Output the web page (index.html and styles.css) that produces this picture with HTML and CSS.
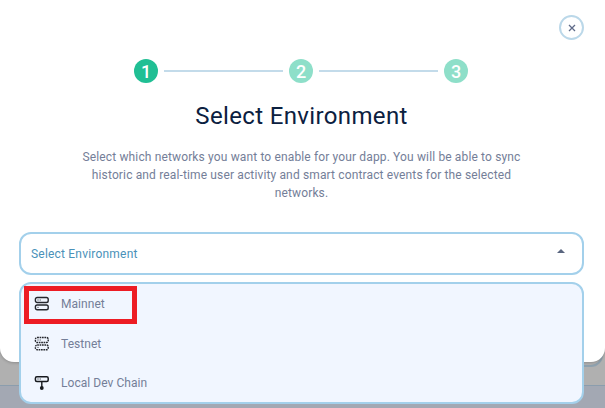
FILE: index.html
```
<!DOCTYPE html>
<html lang="en">
<head>
<meta charset="utf-8">
<title>Select Environment</title>
<link rel="stylesheet" href="styles.css">
</head>
<body>
<div class="footer-bar"></div>
<div class="field-behind"></div>
<main class="modal">
  <header class="modal-top">
    <button class="close" aria-label="Close"><svg width="8" height="8" viewBox="0 0 8 8"><path d="M1 1l6 6M7 1L1 7" stroke="#5f6b89" stroke-width="1.3" fill="none"/></svg></button>
  </header>
  <div class="steps">
    <span class="step active">1</span><span class="line"></span><span class="step">2</span><span class="line"></span><span class="step">3</span>
  </div>
  <h1>Select Environment</h1>
  <p class="intro">Select which networks you want to enable for your dapp. You will be able to sync<br>historic and real-time user activity and smart contract events for the selected<br>networks.</p>
  <div class="select">
    <div class="select-box"><span class="select-label">Select Environment</span><span class="caret"></span></div>
    <div class="menu">
      <div class="option">
        <svg class="icon" viewBox="0 0 16 16"><g fill="none" stroke="#25272d" stroke-width="1.4"><rect x="1.4" y="1.5" width="12.8" height="5" rx="1.8"/><rect x="1.4" y="9" width="12.8" height="4.8" rx="1.8"/></g><path d="M3.5 4h1M5.7 4h1M3.5 11.4h1" stroke="#25272d"/></svg>
        <span>Mainnet</span>
      </div>
      <div class="option">
        <svg class="icon" viewBox="0 0 16 16"><g fill="none" stroke="#25272d" stroke-width="1.4" stroke-dasharray="1.7 .7"><rect x="1.4" y="1.5" width="12.8" height="5" rx="1.8"/><rect x="1.4" y="9" width="12.8" height="4.8" rx="1.8"/></g><path d="M3.5 4h1M5.7 4h1M3.5 11.4h1" stroke="#25272d"/></svg>
        <span>Testnet</span>
      </div>
      <div class="option">
        <svg class="icon" viewBox="0 0 16 16"><rect x="1.4" y="1.7" width="12.8" height="4.8" rx="1.5" fill="none" stroke="#17191e" stroke-width="1.5"/><path d="M3.5 4h1M5.7 4h1" stroke="#17191e"/><path d="M7.8 6.5v6" stroke="#17191e" stroke-width="1.4"/><circle cx="7.8" cy="13" r="1.9" fill="#17191e"/></svg>
        <span>Local Dev Chain</span>
      </div>
      <div class="highlight"></div>
    </div>
  </div>
</main>
</body>
</html>
```
FILE: styles.css
```
* { box-sizing: border-box; }
body {
  margin: 0;
  height: 408px;
  overflow: hidden;
  position: relative;
  background: #b0b0b0;
  font-family: Roboto, "Liberation Sans", sans-serif;
}
.footer-bar {
  position: absolute;
  inset: 385px 0 0;
  background: #a3a8b3;
  border-top: 1px solid #8b9dad;
}
.field-behind {
  position: absolute;
  left: 300px;
  top: 330px;
  width: 303px;
  height: 37px;
  border: 2px solid #8fa1ae;
  border-radius: 12px;
}
.modal {
  position: relative;
  height: 362px;
  padding: 15px 21px 0 19px;
  background: #fff;
  border-radius: 0 0 14px 14px;
  box-shadow: 0 1px 3px #0003;
}
.modal-top { display: flex; justify-content: flex-end; height: 43px; }
.close {
  width: 25px;
  height: 25px;
  padding: 0;
  display: grid;
  place-items: center;
  background: #fff;
  border: 2px solid #bbd8e9;
  border-radius: 50%;
}
.steps { display: flex; align-items: center; gap: 6px; width: 334px; margin-left: 115px; height: 25px; }
.step {
  flex: none;
  width: 24px;
  height: 24px;
  border-radius: 50%;
  background: #8edfc9;
  color: #fff;
  font-size: 18px;
  font-weight: 500;
  line-height: 25px;
  text-align: center;
}
.active { background: #20bf94; }
.line { flex: 1; height: 2px; background: #c3dbea; }
h1 {
  margin: 18px 0 0;
  height: 30px;
  color: #0b2040;
  font-size: 24px;
  font-weight: 400;
  line-height: 30px;
  letter-spacing: .36px;
  text-align: center;
  white-space: nowrap;
}
.intro {
  margin: 17px 0 0;
  height: 84px;
  color: #747e98;
  font-size: 12px;
  line-height: 18.2px;
  letter-spacing: .14px;
  text-align: center;
  white-space: nowrap;
}
.select { position: relative; }
.select-box {
  display: flex;
  align-items: center;
  justify-content: space-between;
  height: 43px;
  padding: 0 17px 0 10px;
  border: 2px solid #a3d0eb;
  border-radius: 12px;
  color: #4a91b9;
  font-size: 12px;
  letter-spacing: .2px;
}
.caret {
  margin-bottom: 5px;
  border: 4px solid transparent;
  border-top: 0;
  border-bottom: 4px solid #59657f;
}
.menu {
  position: absolute;
  top: 50px;
  left: 0;
  right: 0;
  height: 122px;
  padding: 0 13px;
  background: #f1f6ff;
  border: 2px solid #a3d0eb;
  border-radius: 12px;
}
.option {
  display: flex;
  align-items: center;
  gap: 11px;
  height: 39.8px;
  color: #747e98;
  font-size: 12px;
  letter-spacing: .05px;
}
.icon { width: 16px; height: 16px; flex: none; }
.highlight {
  position: absolute;
  left: 3px;
  top: 2px;
  width: 113px;
  height: 38px;
  border: 5px solid #ed1c24;
}
```
